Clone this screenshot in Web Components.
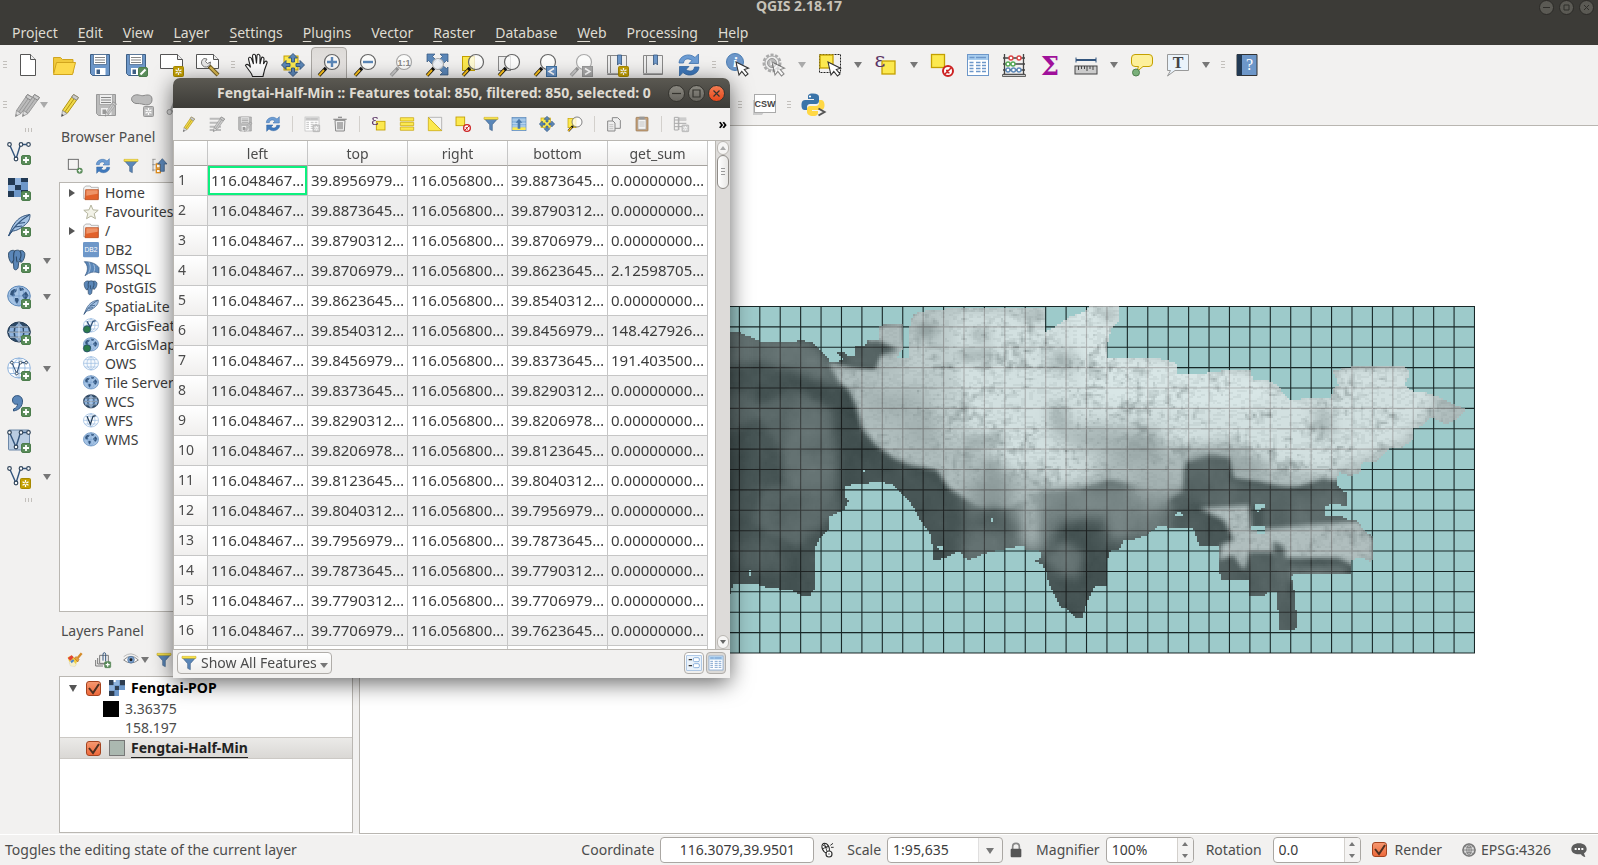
<!DOCTYPE html>
<html lang="en">
<head>
<meta charset="utf-8">
<title>QGIS 2.18.17</title>
<style>
html,body{margin:0;height:100%}
body{font:14px/20px "Noto Sans","Open Sans",sans-serif;color:#4c4c4c;background:#f2f1f0;overflow:hidden}
</style>
</head>
<body>
<qgis-app></qgis-app>
<script>
/* ---------- icon library, 24x24 grid ---------- */
const plus='<rect x="14.5" y="14.5" width="9" height="9" rx="1.5" fill="#5a8c5a" stroke="#4c7d4c"/><path d="M19 16v6M16 19h6" stroke="#fff" stroke-width="1.8"/>';
const star=(c='#c4a000',s='#a68800')=>`<rect x="13.5" y="13.5" width="10" height="10" rx="1" fill="${c}" stroke="${s}"/><path d="M18.5 15v7M15.5 16.7l6 3.6M21.5 16.7l-6 3.6" stroke="#fff" stroke-width="1.3"/><circle cx="18.5" cy="18.5" r="1" fill="${c}"/>`;
const lens=(inner='',h='#fcc21b',k='#111',g='#666',f='#fff')=>`<path d="M9 15l-7 7.5" stroke="${k}" stroke-width="3.4"/><path d="M7 17l-5 5.5" stroke="${h}" stroke-width="2"/><circle cx="15" cy="9" r="7.5" fill="${f}" fill-opacity=".75" stroke="${g}" stroke-width="1.2"/>${inner}`;
const arrow4='<path d="M12 .5l4.5 4.5h-3v4h-3V5h-3zM12 23.5l4.5-4.5h-3v-4h-3v4h-3zM.5 12L5 7.5v3h4v3H5v3zM23.5 12L19 7.5v3h-4v3h4v3z" fill="#5b87b8" stroke="#33557d" stroke-width=".9"/>';
const pencil=(b='#f0d94a',d='#b09310',t='#444')=>`<path d="M15.5 1.5l5 3L9 20.5l-4.5-3z" fill="${b}" stroke="${d}"/><path d="M18 3L6.8 19" stroke="${d}" stroke-width="1"/><path d="M15.5 1.5l5 3-2 2.7-4.8-3z" fill="#ccc" stroke="#888"/><path d="M4.5 17.5l4.5 3-5.5 3z" fill="#ddd" stroke="#888" stroke-width=".7"/><path d="M3.5 23.5l.3-2.5 2 1.2z" fill="${t}"/>`;
const floppy=(b='#6d97c9',s='#3e5f85',w='#fff')=>`<path d="M2.5 1.5h19v21h-17l-2-2z" fill="${b}" stroke="${s}"/><path d="M5.5 1.5h13v10h-13z" fill="${w}" stroke="${s}" stroke-width=".7"/><path d="M7 4.5h10M7 7h10M7 9.5h10" stroke="#777" stroke-width=".9"/><path d="M7 15h10.5v7H7z" fill="${w}"/><path d="M8.5 16.5H12V21H8.5z" fill="${s}"/>`;
const cursor='<path d="M10 9l3 13 2.8-3.6 3.7 4.6 2.5-2-3.7-4.5 4.2-1.3z" fill="#fff" stroke="#333" stroke-width="1.1"/>';
const vec='<path d="M2.5 3.5L9 18l4.5-14.5h6.5" fill="none" stroke="#33557d" stroke-width="1.4"/><g fill="#fff" stroke="#33475c" stroke-width="1.2"><circle cx="2.5" cy="3.5" r="1.8"/><circle cx="9" cy="18" r="1.8"/><circle cx="14" cy="3.5" r="1.8"/><circle cx="21.5" cy="3.5" r="1.8"/></g>';
const globe=(f,s)=>`<ellipse cx="12" cy="11" rx="11.3" ry="10" fill="${f}" stroke="${s}"/><path d="M12 1v20M1 11h22M3 5.5h18M3 16.5h18M12 1C4 6 4 16 12 21M12 1c8 5 8 15 0 20" fill="none" stroke="${s}" stroke-width=".9"/>`;
const globeBlue='<ellipse cx="12" cy="11" rx="11.3" ry="10" fill="#2d4966" stroke="#223a54"/><path d="M3 7h4l-.5 3.5H2zM8.5 7h7l.4 3.5H8zM17 7h4l1 3.5h-5zM2 12h4.5l.5 3.5H3zM8 12h8l-.5 3.5h-7zM17.5 12H22l-1 3.500h-4zM8 5.5L11.5 2v3.5zM12.5 2L16 5.5h-3.5zM8 17l3.5 3.5V17zM12.5 17v3.5L16 17z" fill="#8fb3dd"/><path d="M12 1v20M1 11.2h22M3 6h18M3 16.2h18" stroke="#dfeaf5" stroke-width=".8"/>';
const globeMap='<ellipse cx="12" cy="11" rx="11.3" ry="10" fill="#a5c3e4" stroke="#5b87b8"/><path d="M4 6l3-2 3 .5L9 7 7 8l1 2.500-2 1-3-2zM12 2.500l4 .5 1 2-4 1zM16 9l3-2.500 2.500 4-2.500 4-2-1-2-3zM8 13l3 0 1 2-2 4-2-3z" fill="#33557d"/><path d="M12 1v20M1 11h22M12 1C5 6 5 16 12 21M12 1c7 5 7 15 0 20" fill="none" stroke="#6d97c9" stroke-width=".6"/>';
const elephant='<path d="M2 4c2-3 6-3 7-2 2-1 5-1 6 0 3-1 5 0 6 3 0 3-1 7-4 9l-3-1-1 7c-2 3-5 2-5 0l-.5-6-2 1C3 13 1 8 2 4z" fill="#5b87b8" stroke="#2d4966"/><path d="M9 2c-2 3-1 7-1 9 0 2-1 2-2 3M15 2c2 2 2 6 0 9l2 2M12 14c-1-2-1-4-1-6" fill="none" stroke="#2d4966" stroke-width="1.3"/>';
const feather='<path d="M1.5 23C4 17 5 13 9 8.5 13 4 17 2.5 23 1.5c0 4-1 7-4.5 10C14 15.5 9 18 5.5 18z" fill="#a5c3e4" stroke="#33557d"/><path d="M1.5 23C6 15 12 8 22 2M8 14l7-1M11 10.5l7-1" fill="none" stroke="#33557d" stroke-width="1.2"/>';
const funnel='<path d="M2 4h20l-8 9v9l-4-2v-7z" fill="#5b87b8" stroke="#33557d" stroke-width=".8"/><path d="M1.5 2h21v3h-21z" fill="#fce94f" stroke="#c4a000" stroke-width=".7"/>';
const sync='<path d="M2 10C2 3 12-1 18 4.5L21.5 1v9.5H12l3-3C11 4.5 7 6 6.5 10z" fill="#6d9dd4" stroke="#3f72ad" stroke-width=".8"/><path d="M22 14c0 7-10 11-16 5.5L2.5 23v-9.5H12L9 16.5c4 3 8 1.5 8.5-2.5z" fill="#3f79bd" stroke="#3468a3" stroke-width=".8"/>';
const ysq=(x,y)=>`<rect x="${x}" y="${y}" width="13" height="13" fill="#fce94f" stroke="#c4a000" stroke-width="1.3"/>`;
const no='<circle cx="18" cy="18" r="5" fill="#fff" stroke="#cc2222" stroke-width="2"/><path d="M14.5 21.5l7-7M16 17.5h2.5M17.5 19.7h2" stroke="#cc2222" stroke-width="1.5"/>';
const tbl=(b='#6d97c9',h='#a8cdee')=>`<rect x="1.5" y="1.5" width="21" height="21" fill="#fff" stroke="${b}"/><rect x="2" y="2" width="20" height="5" fill="${h}"/><path d="M3.5 4.5h5M10 4.5h10M3.5 9.5h4M10 9.5h4.5M16 9.5h4M3.5 12.5h4M10 12.5h4.5M16 12.5h4M3.5 15.5h4M10 15.5h4.5M16 15.5h4M3.5 18.5h4M10 18.5h4.5M16 18.5h4" stroke="${b}" stroke-width="1.3"/>`;
const book='<path d="M2.5 2.5h19v19h-19z" fill="#eee" stroke="#888"/><path d="M5.5 2.5v19" stroke="#888"/><path d="M2 20.5h19" stroke="#aaa"/><path d="M12.5 2h4v10l-2-2-2 2z" fill="#6d97c9" stroke="#33557d" stroke-width=".8"/>';
const raster='<path d="M1 1h20v19H1z" fill="#6d97c9"/><path d="M1 1h7v7H1zM14 1h7v4h-7zM8 8h6v5H8zM1 14h6v6H1zM14 13h7v7h-7z" fill="#223a54"/><path d="M8 1h6v7H8zM1 8h7v6H1z" fill="#8fb3dd"/>';
const ICONS={
 new:'<path d="M4.5 1.5h10l5 5v16h-15z" fill="#fff" stroke="#555"/><path d="M14.5 1.5v5h5" fill="#eee" stroke="#555"/>',
 open:'<path d="M1.5 20V4.5h7l2 2h10.5V20z" fill="#f0c93c" stroke="#d1a51e"/><path d="M1.5 21.5l3-12h19l-3 12z" fill="#fcd94c" stroke="#d1a51e"/>',
 save:floppy(), saveas:floppy()+'<rect x="14.5" y="14.5" width="9" height="9" rx="1.5" fill="#5a8c5a" stroke="#4c7d4c"/><path d="M16.5 21.5l5-5" stroke="#fff" stroke-width="2.2"/>',
 composer:'<path d="M.5 1.5h17l5 5v9h-22z" fill="#fff" stroke="#555"/><path d="M17.5 1.5v5h5" fill="#eee" stroke="#555"/>'+star(),
 manager:'<path d="M.5 1.5h17l5 5v9h-22z" fill="#fff" stroke="#555"/><path d="M17.5 1.5v5h5" fill="#eee" stroke="#555"/><path d="M13 13l9 9" stroke="#6e5a1e" stroke-width="4"/><path d="M14 14l8 8" stroke="#d9b951" stroke-width="2.4"/><path d="M8 5.5a4.5 4.5 0 1 0 6 6L14.5 9l-3 1.5-2-2L11 6z" fill="#e8e8e8" stroke="#777"/>',
 hand:'<path d="M8.5 23.5c-.5-2.5-1.5-3.5-3-5.5L1.5 12.5c.5-1.7 2.5-1.5 4 .5l1 1.5L4.5 6c0-2 2-2.5 3-.5L9.5 11 8.500 3c0-2 2.500-2.500 3-.5l1 8 .5-8c.5-2 2.5-1.5 3 .5v8l1.500-6c.5-1.500 2.500-1 2.500 1l-.5 5 1.500-2.500c1-1 2.500 0 2 1.500L20.500 17c-.5 2.500-1 4-1.500 6.500z" transform="translate(-1 0)" fill="#fff" stroke="#222" stroke-width="1.1"/>',
 pan:'<rect x="3" y="3" width="14" height="14" fill="#fce94f" stroke="#c4a000"/>'+arrow4,
 zoomin:lens('<path d="M15 4v10M10 9h10" stroke="#5b87b8" stroke-width="2.4"/>'),
 zoomout:lens('<path d="M10 9h10" stroke="#5b87b8" stroke-width="2.4"/>'),
 zoom11:lens('<text x="15" y="12.5" text-anchor="middle" font-family="Liberation Sans" font-weight="bold" font-size="9" fill="#888">1:1</text>','#ccc','#999','#aaa'),
 full:'<path d="M2 1h8L7.5 3.5l4 4-4 4-4-4L2 9zM23 1h-8l2.5 2.5-4 4 4 4 4-4L23 9zM23 22h-8l2.5-2.5-4-4 4-3 4 3L23 14z" fill="#5b87b8" stroke="#33557d" stroke-width=".7"/><path d="M9 15l-7 7.5" stroke="#111" stroke-width="3.4"/><path d="M7 17l-5 5.5" stroke="#fcc21b" stroke-width="2"/><circle cx="13" cy="11" r="5.5" fill="#eef2f6" fill-opacity=".9" stroke="#aaa"/>',
 zoomsel:'<rect x="1.5" y="3.5" width="12" height="14" fill="#fce94f" stroke="#c4a000"/>'+lens(),
 zoomlay:'<rect x="1.5" y="3.5" width="12" height="14" fill="#eee" stroke="#888"/>'+lens(),
 zoomlast:lens()+'<rect x="13.5" y="13.5" width="10" height="10" fill="#6d97c9" stroke="#3f6f9f"/><path d="M21 15.5l-5 3 5 3" fill="none" stroke="#fff" stroke-width="1.5"/>',
 zoomnext:lens('','#ccc','#999','#aaa')+'<rect x="13.5" y="13.5" width="10" height="10" fill="#aaa" stroke="#999"/><path d="M16 15.5l5 3-5 3" fill="none" stroke="#fff" stroke-width="1.5"/>',
 bookmarknew:book+star(), bookmarks:book, refresh:sync,
 identify:'<circle cx="9" cy="9" r="8.5" fill="#6d97c9" stroke="#4d7fb4"/><text x="9" y="14" text-anchor="middle" font-family="Liberation Serif" font-style="italic" font-weight="bold" font-size="15" fill="#fff">i</text>'+cursor,
 action:'<circle cx="10" cy="10" r="8" fill="#eee" stroke="#aaa" stroke-width="3" stroke-dasharray="3 1.5"/><circle cx="10" cy="10" r="7" fill="#eee" stroke="#aaa"/><circle cx="10" cy="10" r="4.5" fill="#bbb" stroke="#999"/><path d="M8.5 7.5v5l4-2.5z" fill="#fff"/><g opacity=".55">'+cursor+'</g>',
 select:'<rect x="1.5" y="1.5" width="21" height="18" fill="none" stroke="#222" stroke-dasharray="2 1"/>'+ysq(2,2)+cursor,
 expr:ysq(8,8)+'<text x="6" y="14" text-anchor="middle" font-family="DejaVu Serif" font-size="21" fill="#5c3566">ε</text>',
 deselect:ysq(1.5,1.5)+no, table:tbl(),
 abacus:'<path d="M2.5 1v20M21.5 1v20M1 5h22M1 11h22M1 17h22M1 21.5h22" stroke="#444" stroke-width="1.3"/><g fill="#fff" stroke-width="1.4"><g stroke="#d44"><circle cx="9" cy="5" r="2"/><circle cx="17" cy="5" r="2"/></g><g stroke="#5a5"><circle cx="6" cy="11" r="2"/><circle cx="11" cy="11" r="2"/></g><g stroke="#5b87b8"><circle cx="6" cy="17" r="2"/><circle cx="11.5" cy="17" r="2"/><circle cx="17" cy="17" r="2"/></g></g><path d="M.5 21.5h23v2H.5z" fill="#ccc" stroke="#444" stroke-width=".8"/>',
 sigma:'<text x="12" y="22" text-anchor="middle" font-family="DejaVu Serif" font-weight="bold" font-size="26" fill="#a0109a">Σ</text>',
 ruler:'<path d="M2 7h20" stroke="#33557d" stroke-width="2"/><path d="M2 4.5v5M22 4.5v5" stroke="#33557d"/><rect x="1" y="13" width="22" height="8" fill="#ccc" stroke="#444"/><path d="M4.5 13v4M7.5 13v3M10.5 13v3M13 13v5M16 13v3M19 13v4" stroke="#444"/>',
 tip:'<path d="M5 1.5h14q3.5 0 3.5 3.5v5q0 3.5-3.5 3.5h-6L6.5 19l2-5.5H5Q1.5 13.5 1.5 10V5Q1.5 1.5 5 1.5z" fill="#fdf09a" stroke="#c4a000"/><circle cx="6" cy="19.5" r="3.5" fill="#7ab07a" stroke="#4f7f4f"/>',
 text:'<path d="M1.5 1.5h21v16H9L1.5 23l3-5.5h-3z" fill="#eaf3fb" stroke="#999"/><text x="12" y="15" text-anchor="middle" font-family="Liberation Serif" font-weight="bold" font-size="16" fill="#444">T</text>',
 help:'<path d="M2 1.5h20v21H2z" fill="#6d97c9" stroke="#333"/><path d="M2 1.5h5v21H2z" fill="#223a54"/><text x="14.5" y="17" text-anchor="middle" font-family="Liberation Serif" font-size="16" fill="#fff">?</text>',
 pencils:'<g transform="translate(-4 0)">'+pencil('#bbb','#999','#888')+'</g><g transform="translate(3 0)">'+pencil('#bbb','#999','#888')+'</g>',
 pencil:pencil(), savegray:floppy('#bbb','#999','#eee')+'<g transform="translate(9 8) scale(.65)">'+pencil('#ccc','#999','#888')+'</g>',
 blob:'<path d="M4 2.5c4-2 7 1 10 0 4-1 8-1 8 4s-4 6-8 5-5-1-8-1c-5-1-6-6-2-8z" fill="#bbb" stroke="#888"/>'+star('#bbb','#999'),
 node:'<path d="M4 18Q8 12 9 4M4 18l12 1" fill="none" stroke="#aaa" stroke-width="2"/><circle cx="3.5" cy="19" r="2.5" fill="#ddd" stroke="#999"/>',
 csw:'<path d="M1 7v15h9l2-3h-9V7z" fill="#ccc"/><rect x="2.5" y="1.5" width="21" height="18" fill="#fff" stroke="#aaa"/><text x="13" y="14" text-anchor="middle" font-family="Liberation Sans" font-weight="bold" font-size="9" fill="#444">CSW</text>',
 python:'<path d="M12 .5c-5 0-5 2-5 3.5V6h6v1H4C1 7 .5 10 .5 12s.5 5 3 5H6v-3c0-2 1.5-3 3-3h6c2 0 3-1.5 3-3V4c0-2-2-3.5-6-3.5z" fill="#3a74a9"/><path d="M12 23c5 0 5-2 5-3.5V18h-6v-1h9c3 0 3.5-3 3.5-5s-1-5-3-5H18v3c0 2-1.5 3-3 3H9c-2 0-3 1.5-3 3v3c0 2 2 4 6 4z" fill="#ffd845"/><circle cx="9" cy="3.5" r="1.1" fill="#fff"/><path d="M17.5 15.5l6 3.5-6 3.5" fill="none" stroke="#555" stroke-width="2"/>',
 vector:vec+plus, raster:raster+plus, spatialite:feather+plus, postgis:'<g transform="scale(.85 .95)">'+elephant+'</g>'+plus, wms:globeMap+plus, wcs:globeBlue+plus,
 wfs:globe('#fff','#8fb3dd')+'<g transform="translate(3 3) scale(.75)">'+vec+'</g>'+plus,
 comma:'<path d="M5.5 7c0-6 10-6 10 1 0 5-3 9-9 10v-2c3-1 4-3 4-5-3 1-5-1-5-4z" fill="#5b87b8" stroke="#33557d"/>'+plus,
 virt:'<rect x="1.5" y="1" width="21" height="20" rx="1" fill="#b9cce2" stroke="#6d88a8"/>'+vec+plus,
 shape:vec+star(),
 addsel:'<rect x="2" y="2" width="15" height="15" fill="#fff" fill-opacity=".2" stroke="#666" stroke-width="1.4"/><circle cx="19" cy="19" r="4.5" fill="#5a8c5a"/><path d="M19 16.5v5M16.5 19h5" stroke="#fff" stroke-width="1.4"/>',
 filter:funnel,
 collapse:'<path d="M2 2h5M2 10h5M2 18h5M3 2v18M9 7v6h5M9 13v7h5" fill="none" stroke="#777"/><rect x="8" y="9" width="6" height="6" fill="#fff" stroke="#e58f1b" stroke-width="2"/><rect x="8" y="17" width="6" height="5" fill="#fff" stroke="#e58f1b" stroke-width="2"/><path d="M17 1l7 8h-4v11h-6V9h-4z" fill="#5b87b8" stroke="#33557d"/>',
 folder:'<path d="M1 4.5l3-3h7l1 2h11v17H1z" fill="#f4f4f4" stroke="#999"/><path d="M4 7h19v15H3z" fill="#e2612a" stroke="#b34312"/><path d="M5 8h17v5L5 16z" fill="#f3a983" fill-opacity=".7"/>',
 fav:'<path d="M12 1.5l3 7.3 7.8.6-6 5.1 1.9 7.6L12 18l-6.7 4.1 1.9-7.6-6-5.1 7.8-.6z" fill="#f3f3e8" stroke="#b5b59f" stroke-width="1.5"/>',
 db2:'<rect x="0" y="0" width="24" height="23" rx="2" fill="#6d97c9"/><text x="12" y="15.5" text-anchor="middle" font-family="Liberation Sans" font-size="10" fill="#fff">DB2</text>',
 mssql:'<path d="M2 1c10 0 18 3 22 9v8c-8-3-14-1-21 4C8 14 8 7 2 1z" fill="#5b87b8" stroke="#33557d"/><path d="M9 2c3 6 2 11-1 17M16 5c2 4 2 8 0 12" fill="none" stroke="#c5d8ee"/>',
 elephant, feather, arcfs:globe('#fff','#8fb3dd')+'<path d="M6 5l5 9 4-9 4-1" fill="none" stroke="#33557d" stroke-width="2"/><circle cx="6" cy="17" r="5.5" fill="#2c7a4b" stroke="#1d3f6b"/>',
 arcms:globeMap+'<circle cx="6" cy="17" r="5.5" fill="#2c7a4b" stroke="#1d3f6b"/>',
 ows:globe('#f5f9fd','#8fb3dd'), tile:globeMap, globeblue:globeBlue, wfsg:globe('#fff','#8fb3dd')+'<path d="M6 5l5 12 4-12 4-1" fill="none" stroke="#223a54" stroke-width="1.8"/>',
 style:'<path d="M1 8l6-3 8 8-2 8-8-1z" fill="#f3cf3a"/><path d="M1 9l6-4 3 3-5 5z" fill="#e0433b"/><path d="M3 15l5-3 6 7-2 3-7-1z" fill="#f7f0c8" stroke="#ccc" stroke-width=".5"/><path d="M5 14l4-3 2 2-4 4z" fill="#4a86cf"/><path d="M11 9l3-2 4 4-2 4z" fill="#e8a33d" stroke="#b36b12"/><path d="M16 9l6-7" stroke="#d58b28" stroke-width="3.5"/>',
 group:'<path d="M1 12v9h11M4 9v9h11M7 5h13v12H7z" fill="none" stroke="#777" stroke-width="1.5"/><path d="M12 13V4q0-3 2-3t2 3v10" fill="none" stroke="#33557d" stroke-width="1.5"/>'+plus,
 eye:'<path d="M1 12Q12 1 23 12 12 21 1 12z" fill="#fff" stroke="#888" stroke-width="1.5"/><circle cx="12" cy="11.5" r="5" fill="#7ba0cd" stroke="#4d719c"/><circle cx="12" cy="11.5" r="2.2" fill="#222"/><path d="M1 7Q12-2 23 8" fill="none" stroke="#bbb" stroke-width="1.5"/>',
 rasterlayer:'<path d="M0 0h24v24H0z" fill="#6d97c9"/><path d="M0 0h7v8H0zM16 0h8v8h-8zM9 9h6v6H9zM0 16h8v8H0z" fill="#2e3d50"/><path d="M15 15h9v9h-9z" fill="#fff"/><path d="M7 0h9v8H7zM0 8h8v8H0z" fill="#8fb3dd"/><path d="M7 0h3v3H7z" fill="#fff"/>',
 editmulti:'<path d="M1 4h17M1 10h17M1 16h17M1 21h17" stroke="#bbb" stroke-width="3"/><g transform="translate(3 0)">'+pencil('#ccc','#999','#888')+'</g>',
 addrow:tbl('#bbb','#ccc')+star('#ccc','#aaa'),
 addcol:'<path d="M2 2h6v19H2zM2 6h18M2 11h18M2 16h12" stroke="#aaa" stroke-width="1.5"/><rect x="9" y="2" width="11" height="4" fill="#ccc"/><path d="M9 2v19" stroke="#aaa"/>'+star('#ccc','#aaa'),
 trash:'<path d="M4.5 6.5h15l-1 16h-13z" fill="#eee" stroke="#888" stroke-width="1.5"/><path d="M2 5h20M9 2h6M9 9v11M12 9v11M15 9v11" stroke="#777" stroke-width="1.6"/>',
 selall:'<path d="M2 2.5h20v5H2zM2 9.5h20v5H2zM2 16.5h20v5H2z" fill="#fce94f" stroke="#c4a000"/>',
 invert:'<path d="M2 2h20v20z" fill="#f4f4f4" stroke="#999"/><path d="M2 2v20h20z" fill="#fce94f" stroke="#c4a000"/>',
 movetop:'<rect x="1.5" y="2" width="21" height="20" fill="#8fb8e0" stroke="#5b87b8"/><path d="M2 6h20M2 11h20M2 15h20" stroke="#d8e8f6"/><path d="M2 17h20v4H2z" fill="#fce94f"/><path d="M12 4l5 6h-3v9h-4v-9H7z" fill="#4a79ad"/>',
 copy:'<path d="M9.5 2.5h8l4 4v12h-12z" fill="#eee" stroke="#888" stroke-width="1.5"/><path d="M2.5 7.5h8l3 3v12h-11z" fill="#eee" stroke="#888" stroke-width="1.5"/><path d="M5 13h6M5 16h6M5 19h6" stroke="#aaa"/>',
 paste:'<rect x="3" y="2" width="18" height="20.5" rx="1" fill="#c9a37a" stroke="#8e6f4b"/><path d="M6 5h12v15H6z" fill="#f4f4f4" stroke="#999"/><path d="M8 1h8v4H8z" fill="#999"/><path d="M8 9h8M8 12h8M8 15h8" stroke="#aaa"/>',
 formview:'<rect x="1" y="1" width="22" height="22" fill="#eaf2fa" stroke="#8fb3dd"/><path d="M4 7h5M4 16h5" stroke="#333" stroke-width="2"/><rect x="11" y="4" width="9" height="6" rx="2" fill="#fff" stroke="#8fb3dd" stroke-width="1.5"/><rect x="11" y="13" width="9" height="6" rx="2" fill="#fff" stroke="#8fb3dd" stroke-width="1.5"/>',
 extents:'<ellipse cx="10" cy="9" rx="5" ry="7.5" transform="rotate(-25 10 9)" fill="#fff" stroke="#222" stroke-width="1.8"/><path d="M5 4l8 5M6 10l8-4M8 2l4 12" stroke="#222" stroke-width="1.3"/><circle cx="15" cy="18" r="4.5" fill="#fff" stroke="#333" stroke-width="1.8"/><path d="M17 5l4-3M18 8l4 0M14 18h2" stroke="#333" stroke-width="1.5"/>',
 lock:'<path d="M7 11V7q0-5 5-5t5 5v4" fill="none" stroke="#888" stroke-width="2.5"/><rect x="4" y="10" width="16" height="13" rx="1.5" fill="#555"/>',
 crs:'<circle cx="12" cy="12" r="9" fill="#ddd" stroke="#777" stroke-width="2.5"/><path d="M12 2v20M2 12h20M5 6q7 5 14 0M5 18q7-5 14 0M12 3q-7 9 0 18q7-9 0-18" fill="none" stroke="#888" stroke-width="1.5"/>',
 bubble:'<path d="M12 2c7 0 11.5 3.5 11.5 8.5 0 3-1.5 5-4 6.5l2 5.5c-3 0-5.5-2-6.5-4h-3c-7 0-11.5-3-11.5-8S5 2 12 2z" fill="#5c5c5c"/><path d="M5.5 9h3v3h-3zM10.5 9h3v3h-3zM15.5 9h3v3h-3z" fill="#fff"/>'
};

class Base extends HTMLElement{
  connectedCallback(){
    if(!this.shadowRoot){this.attachShadow({mode:'open'}).innerHTML=this.render();this.ready&&this.ready();}
  }
}
const define=(n,c)=>customElements.define(n,c);

define('q-icon',class extends Base{
  render(){return `<style>:host{display:block;flex:none;width:var(--icon,24px);height:var(--icon,24px)}svg{display:block;width:100%;height:100%;overflow:visible}</style><svg viewBox="0 0 24 24" fill="none" aria-hidden="true">${ICONS[this.getAttribute('name')]||''}</svg>`}
});

/* Button with optional drop-down arrow */
define('tool-button',class extends Base{
  render(){
    const m=this.hasAttribute('menu');
    return `<style>
    :host{display:flex;flex:none;width:var(--cell,36px);height:var(--cell,36px)}
    :host([menu]){width:var(--menu-cell,56px)}
    :host([menu=dim]){--arrow:#aaa}
    button{all:unset;display:flex;align-items:center;flex:1;height:100%;padding-left:var(--inset,6px);box-sizing:border-box}
    :host([pressed]) button{background:linear-gradient(#dddad7,#eceae8);border:1px solid #a9a6a2;border-radius:4px;padding-left:5px}
    i{width:0;border:4px solid transparent;border-top:6px solid var(--arrow,#777);border-bottom:0;margin-left:var(--arrow-gap,12px)}
    </style><button aria-label="${this.getAttribute('icon')}"><q-icon name="${this.getAttribute('icon')}"></q-icon>${m?'<i></i>':''}</button>`}
});

define('bar-handle',class extends Base{
  render(){return `<style>:host{display:flex;flex:none;width:13px;align-items:center;justify-content:center}
  :host([first]){width:10px}
  i{width:4px;height:8px;background:repeating-linear-gradient(#c3c0bc 0 1px,transparent 1px 3px)}
  :host([side]){width:auto;height:10px}:host([side]) i{width:8px;height:4px;background:repeating-linear-gradient(90deg,#c3c0bc 0 1px,transparent 1px 3px)}</style><i></i>`}
});

const build=s=>s.split(' ').map(t=>{
  if(t==='|')return '<bar-handle></bar-handle>';
  if(t==='^')return '<bar-handle first></bar-handle>';
  if(t==='/')return '<span class="sep"></span>';
  if(t==='_')return '<span class="gap"></span>';
  const m=t.match(/^([a-z0-9]+)([>~*]?)$/);
  return `<tool-button icon="${m[1]}"${m[2]==='>'?' menu':m[2]==='~'?' menu="dim"':m[2]==='*'?' pressed':''}></tool-button>`;
}).join('');

define('tool-bar',class extends Base{
  render(){return `<style>:host{display:flex;height:40px;align-items:center}bar-handle{height:100%}
  .gap{width:537px;flex:none}.sep{width:1px;height:16px;margin:0 5px;background:#d3d0cc}</style>${build(this.getAttribute('items'))}`}
});

define('title-bar',class extends Base{
  render(){return `<style>:host{display:grid;grid-template-columns:1fr auto 1fr;height:18px;background:#3c3b37;color:#c6c2b8;font-weight:700;line-height:12px;overflow:hidden}
  .b{display:flex;gap:5px;justify-content:flex-end;padding-right:4px}
  button{all:unset;width:15px;height:15px;border:1px solid #2b2a27;border-radius:50%;background:#5b5a54;box-sizing:border-box;display:grid;place-items:center}
  svg{width:7px;height:7px;stroke:#2f2e2a;fill:none}</style><span></span><span>QGIS 2.18.17</span><span class="b">
  <button aria-label="Minimize"><svg viewBox="0 0 7 7"><path d="M0 3.5h7"/></svg></button><button aria-label="Restore"><svg viewBox="0 0 7 7"><path d="M1 1h5v5H1z"/></svg></button><button aria-label="Close"><svg viewBox="0 0 7 7"><path d="M1 1l5 5M6 1L1 6"/></svg></button></span>`}
});

define('menu-bar',class extends Base{
  render(){
    const items=['Pro_ject','_Edit','_View','_Layer','_Settings','_Plugins','Vect_or','_Raster','_Database','_Web','Pro_cessing','_Help'];
    return `<style>:host{display:flex;gap:20px;height:27px;padding:0 12px;background:#3c3b37;color:#dfdbd2}
    button{all:unset;line-height:30px}u{text-underline-offset:3px}</style>${items.map(t=>`<button>${t.replace(/_(.)/,'<u>$1</u>')}</button>`).join('')}`}
});

define('layer-bar',class extends Base{
  render(){return `<style>:host{display:flex;flex-direction:column;width:59px;--inset:7px;--menu-cell:59px;--arrow-gap:12px}
  bar-handle{width:58px}</style><bar-handle side></bar-handle>${build('vector raster spatialite postgis> wms> wcs wfs> comma virt shape>')}<bar-handle side></bar-handle>`}
});

/* Dock: title, small toolbar and a slotted white box */
define('dock-panel',class extends Base{
  render(){return `<style>:host{display:flex;flex-direction:column;min-height:0;--icon:16px;--cell:28px;--menu-cell:33px;--arrow-gap:2px}
  h2{margin:0 0 2px;padding-left:2px;font:inherit;line-height:22px}
  tool-bar{height:32px;padding-left:2px}
  .box{flex:1;background:#fff;border:1px solid #bab7b2;overflow:hidden}</style>
  <h2>${this.getAttribute('heading')}</h2><tool-bar items="${this.getAttribute('tools')}"></tool-bar><div class="box"><slot></slot></div>`}
});

define('browser-tree',class extends Base{
  render(){
    const rows=[['folder','Home',1],['fav','Favourites'],['folder','/',1],['db2','DB2'],['mssql','MSSQL'],['elephant','PostGIS'],['feather','SpatiaLite'],['arcfs','ArcGisFeatureServer'],['arcms','ArcGisMapServer'],['ows','OWS'],['tile','Tile Server (XYZ)'],['globeblue','WCS'],['wfsg','WFS'],['tile','WMS']];
    return `<style>:host{display:block;--icon:16px;color:#3c3c3c}
    ul{margin:0;padding:0;list-style:none}li{display:flex;align-items:center;height:19px;padding-left:9px;white-space:nowrap}
    i{width:6px;height:0;border:4px solid transparent;border-left:6px solid #555;border-right:0;box-sizing:border-box;margin-right:8px}
    i.n{border-color:transparent}q-icon{margin-right:6px}</style><ul>${rows.map(r=>`<li><i class="${r[2]?'':'n'}"></i><q-icon name="${r[0]}"></q-icon>${r[1]}</li>`).join('')}</ul>`}
});

const checkCss=`input[type=checkbox]{appearance:none;margin:0;width:15px;height:15px;flex:none;border:1px solid #a5431f;border-radius:3px;background:no-repeat center/13px url('data:image/svg+xml,<svg xmlns="http://www.w3.org/2000/svg" viewBox="0 0 13 13"><path d="M2 6l4 5 6-9" fill="none" stroke="%23503020" stroke-width="2"/></svg>'),linear-gradient(#f5976f,#ee6a3c)}`;

define('layer-tree',class extends Base{
  render(){return `<style>:host{display:block;--icon:16px;color:#4c4c4c}${checkCss}
  div{display:flex;align-items:center;height:19px;box-sizing:border-box}
  .l{height:22px;padding-left:26px;color:#000;font-weight:700}
  .l input{margin-right:8px}.l label{margin-left:6px}
  .s{background:linear-gradient(#ebeae8,#dad8d5);border:1px solid #ccc9c5;border-width:1px 0;color:#222}
  .s label{border-bottom:1px solid #222;line-height:18px}
  i{width:16px;height:16px;flex:none}.k{background:#000;margin:0 6px 0 43px}.g{background:#abb8b0;border:1px solid #777;box-sizing:border-box}
  b{width:0;border:4px solid transparent;border-top:7px solid #555;border-bottom:0;margin:0 9px 0 -17px}
  .t{padding-left:65px}</style>
  <div class="l"><b></b><input type="checkbox" id="p" checked><q-icon name="rasterlayer"></q-icon><label for="p">Fengtai-POP</label></div>
  <div><i class="k"></i>3.36375</div><div class="t">158.197</div>
  <div class="l s"><input type="checkbox" id="h" checked><i class="g"></i><label for="h">Fengtai-Half-Min</label></div>`}
});

/* Map: vector grid with a translucent grey population raster above it */
define('map-canvas',class extends Base{
  render(){
    let d='';
    for(let i=0;i<=50;i++)d+=`M${(i*20.42+.5).toFixed(2)} 0V347`;
    for(let j=0;j<=17;j++)d+=`M0 ${(j*20.38+.5).toFixed(2)}H1022`;
    return `<style>:host{display:flex;align-items:center;justify-content:center;background:#fff;border:1px solid #b9b6b1;border-right:0;overflow:hidden;min-width:0}
    .map{display:grid;flex:none;width:1022px;height:348px;margin-right:30px}
    .map>*{grid-area:1/1;width:100%;height:100%}canvas{image-rendering:pixelated;opacity:.7}</style>
    <div class="map"><svg viewBox="0 0 1022 348"><path d="M0 0h1022v347H0z" fill="#9dcaca"/><path d="${d}" fill="none" stroke="#0a1515" stroke-opacity=".9" stroke-width="1.1"/></svg><canvas width="511" height="174"></canvas></div>`}
  ready(){
    const W=511,H=174,mk=()=>{const c=document.createElement('canvas');c.width=W;c.height=H;const g=c.getContext('2d');g.setTransform(.5,0,0,.5,-227,-153);return g};
    const poly=(g,s)=>{const p=s.split(' ').map(Number);g.beginPath();for(let i=0;i<p.length;i+=2)g.lineTo(p[i],p[i+1]);g.closePath();g.fill()};
    const m=mk();
    poly(m,'500 380 600 340 700 325 730 331 740 332 760 341 795 342 800 340 812 342 822 350 829 358 830 363 838 363 844 359 838 352 845 352 850 356 857 357 857 346 867 345 869 340 881 341 880 327 887 324 904 324 903 350 896 359 910 357 911 325 914 314 925 311 955 308 1045 308 1045 324 1047 332 1060 324 1070 317 1083 313 1090 306 1120 306 1120 320 1112 330 1108 345 1108 358 1122 357 1160 358 1165 360 1177 363 1177 375 1196 375 1222 371 1252 370 1254 381 1270 381 1279 386 1290 400 1315 398 1332 399 1334 388 1340 386 1334 371 1352 367 1363 366 1406 367 1411 372 1406 385 1413 391 1425 392 1442 398 1455 405 1467 409 1465 412 1455 421 1447 424 1432 417 1424 426 1414 429 1414 440 1402 448 1390 448 1378 462 1363 463 1362 472 1350 476 1340 472 1337 484 1341 489 1348 493 1348 506 1335 504 1325 506 1325 516 1341 515 1350 520 1358 520 1365 530 1373 536 1373 562 1360 557 1352 561 1352 573 1292 575 1295 590 1297 610 1297 629 1280 631 1279 610 1277 592 1267 592 1267 596 1250 595 1250 580 1222 580 1219 565 1220 546 1200 545 1194 528 1178 529 1160 525 1148 535 1137 539 1125 540 1120 549 1112 550 1108 560 1109 585 1095 587 1089 600 1083 618 1076 618 1070 610 1062 607 1057 597 1050 585 1048 573 1044 565 1035 561 1043 558 1040 549 1028 551 1025 545 1010 548 990 552 970 560 965 558 961 551 950 556 940 560 934 560 934 548 931 533 921 520 913 505 900 490 892 484 880 482 860 484 845 486 845 497 850 501 845 510 830 517 831 528 820 540 815 550 815 590 810 597 803 596 795 591 780 589 770 588 760 585 735 583 730 598 600 600 500 500');
    m.globalCompositeOperation='destination-out';
    [[1257,504,4,7],[1263,504,2,5],[1253,526,12,4],[1258,530,8,3],[863,470,4,2],[939,546,5,3],[992,518,2,3],[1177,513,6,3],[750,571,2,4]].forEach(r=>m.fillRect(...r));
    const g=mk();
    g.fillStyle='rgb(34,34,34)';g.fillRect(400,300,1100,360);
    const f=(v,b,s,a=1)=>{g.filter=b?`blur(${b}px)`:'none';g.fillStyle=`rgba(${v},${v},${v},${a})`;poly(g,s)};
    /* western hills */
    f(76,2,'720 325 770 335 815 345 830 362 845 385 838 392 800 372 780 368 760 362 720 368');
    f(74,2,'782 405 800 390 832 410 838 450 838 515 815 518 790 500 782 465');
    f(62,2,'725 395 750 390 760 405 795 390 788 440 780 450 760 415 725 440');
    f(62,2,'765 490 785 485 840 505 825 525 800 545 765 535 755 515');
    f(48,2,'735 540 775 540 790 570 760 575 735 560');
    f(28,2,'800 380 850 390 860 420 870 450 850 465 840 400');
    /* southern fringe */
    f(70,3,'965 510 985 505 1010 520 1030 560 960 565 965 540');
    f(100,3,'1010 490 1060 480 1120 480 1190 480 1190 535 1110 540 1090 520 1060 530 1045 560 1020 545 1005 520');
    f(125,3,'1130 485 1190 480 1175 510 1130 515',.7);
    /* urban core */
    f(184,1,'830 363 844 366 876 369 882 348 868 342 880 325 904 322 904 350 910 320 925 305 1125 303 1200 360 1330 370 1480 360 1480 430 1370 476 1350 478 1320 484 1290 490 1262 482 1235 478 1230 458 1215 452 1186 462 1184 485 1160 488 1110 480 1080 488 1040 492 1010 508 985 508 965 498 950 488 938 470 912 465 895 458 878 446 863 428 857 405 850 390 840 382');
    f(205,3,'912 312 970 308 980 450 950 440 930 400 890 400 870 385 905 370');
    f(234,3,'960 312 1125 303 1110 355 1180 360 1330 398 1340 365 1410 365 1440 400 1400 445 1330 472 1250 462 1150 440 1060 480 1010 470 975 440 960 400 955 350');
    f(242,2,'1075 310 1125 303 1112 355 1180 365 1255 375 1280 392 1240 410 1100 400 1070 360');
    f(224,3,'1020 465 1060 460 1100 470 1080 484 1050 484');
    f(185,3,'1025 470 1040 470 1038 545 1028 550 1022 520');
    f(165,4,'1140 462 1185 475 1180 500 1130 492');
    f(135,4,'960 485 1000 480 1018 490 1005 515 975 508');
    f(110,3,'1045 490 1110 486 1130 500 1050 505',.7);
    f(125,4,'1050 432 1090 425 1160 428 1165 455 1120 462 1080 450',.6);
    f(110,3,'1185 450 1225 440 1270 460 1260 475 1190 470',.5);
    f(130,4,'865 390 925 385 930 400 900 415 870 410',.4);f(125,4,'905 418 930 418 935 448 915 448',.4);
    f(115,3,'985 462 1000 458 1006 480 995 495 985 485',.6);
    f(120,3,'1050 405 1066 405 1068 430 1055 432',.7);f(120,3,'1048 355 1075 352 1080 368 1055 370',.6);f(130,3,'1315 408 1330 408 1333 435 1322 438',.7);
    f(115,2,'915 324 935 322 938 336 920 340',.7);f(130,2,'1100 312 1115 308 1118 320 1105 320',.6);f(120,2,'1022 312 1042 312 1042 320 1025 322',.5);
    f(120,2,'958 350 995 348 995 362 960 362',.5);f(120,2,'965 436 1005 434 1005 446 970 448',.6);f(120,2,'970 330 990 328 992 342 972 338',.5);
    f(30,3,'1062 525 1105 518 1110 590 1085 618 1060 600');f(110,2,'1045 560 1062 540 1085 552 1080 580 1060 575',.6);
    f(40,3,'975 510 1000 505 1022 530 1010 535 980 525',.8);
    f(64,3,'1160 505 1180 505 1200 545 1150 530',.6);
    /* eastern lowland */
    f(58,1,'1186 470 1210 458 1230 458 1232 480 1265 485 1300 487 1325 478 1350 490 1352 525 1265 530 1265 505 1200 505 1170 505 1172 498 1184 492');
    f(80,3,'1285 495 1345 495 1345 520 1290 525',.7);
    f(42,2,'1172 500 1200 505 1225 525 1235 545 1195 550 1175 530');
    f(50,1,'1215 560 1250 552 1278 540 1302 578 1300 640 1275 640 1240 600 1215 585');
    f(185,1,'1200 508 1250 505 1252 530 1310 525 1360 521 1375 540 1375 575 1340 558 1280 558 1275 552 1250 552 1245 570 1235 555 1220 560 1222 545 1235 540 1225 520');
    f(95,2,'1282 568 1345 566 1350 580 1290 580');f(60,1,'1274 541 1285 546 1290 575 1285 600 1275 570');
    f(52,1,'857 347 878 340 900 350 878 357 876 368 850 366 845 350');
    const out=this.shadowRoot.querySelector('canvas').getContext('2d');
    const A=m.getImageData(0,0,W,H).data,img=g.getImageData(0,0,W,H),D=img.data;
    const h=(x,y)=>{const s=Math.sin(x*127.1+y*311.7)*43758.5453;return s-Math.floor(s)};
    const n=(x,y)=>{const i=Math.floor(x),j=Math.floor(y),u=x-i,v=y-j;return (h(i,j)*(1-u)+h(i+1,j)*u)*(1-v)+(h(i,j+1)*(1-u)+h(i+1,j+1)*u)*v};
    for(let y=0;y<H;y++)for(let x=0;x<W;x++){
      const k=(y*W+x)*4,b=D[k];let v=b;
      if(b>130){const q=(b-130)/110,t=n(x/8+9,y/6)*.5+n(x/2,y/2+40)*.5;v-=Math.max(0,t-.55)*180*q;v-=(h(x>>1,y)>.7?15*q:0);}
      else v+=(n(x/9,y/9)-.5)*18+(n(x/3,y/3)-.5)*6;
      D[k]=D[k+1]=D[k+2]=Math.max(10,Math.min(245,v));D[k+3]=A[k+3]>127?255:0;
    }
    out.putImageData(img,0,0);
  }
});

define('attribute-table',class extends Base{
  render(){
    const t='8956979 8873645 8790312 8706979 8623645 8540312 8456979 8373645 8290312 8206978 8123645 8040312 7956979 7873645 7790312 7706979 7623645'.split(' ');
    const sum={3:'2.12598705…',5:'148.427926…',6:'191.403500…'};
    let r='';
    for(let i=0;i<16;i++)r+=`<tr><th scope="row">${i+1}</th><td${i?'':' class="cur"'}>116.048467…</td><td>39.${t[i]}…</td><td>116.056800…</td><td>39.${t[i+1]}…</td><td>${sum[i]||'0.00000000…'}</td></tr>`;
    r+='<tr><th></th><td></td><td></td><td></td><td></td><td></td></tr>';
    return `<style>:host{display:grid;grid-template-columns:1fr 14px;border-top:1px solid #b9b6b1;border-bottom:1px solid #b9b6b1;overflow:hidden;background:#fff}
    .v{overflow:hidden;border:1px solid #b9b6b1;border-width:0 1px}
    table{border-collapse:separate;border-spacing:0;table-layout:fixed;width:534px;color:#3c3c3c}
    th,td{box-sizing:border-box;height:30px;padding:0 0 2px 4px;border:1px solid #c6c6c6;border-width:0 1px 1px 0;font-weight:400;text-align:left;white-space:nowrap;overflow:hidden}
    td{font-size:15px;padding-left:3px}
    th{background:linear-gradient(#fff,#f0efee);color:#4c4c4c}thead th{height:25px;text-align:center;padding:1px 0 0;border-bottom-color:#a5a29e}
    col{width:100px}col:first-child{width:34px}
    tbody tr:nth-child(even) td{background:#eee}
    .cur{box-shadow:inset 0 0 0 2px #0df07e}
    .sb{display:flex;flex-direction:column;align-items:center;background:#dddbd9}
    .sb button{all:unset;box-sizing:border-box;width:12px;border:1px solid #b9b6b1;border-radius:6px;background:#f6f5f4;height:14px;display:grid;place-items:center}
    .sb .th{height:34px;background:linear-gradient(90deg,#fff,#e8e7e5);border-color:#8f8c88}
    .th i{width:4px;height:8px;background:repeating-linear-gradient(#999 0 1px,transparent 1px 3px)}
    .u,.d{border:3px solid transparent}.u{border-bottom:4px solid #aaa;border-top:0}.d{border-top:4px solid #666;border-bottom:0}
    .sp{flex:1}</style>
    <div class="v"><table><colgroup><col><col><col><col><col><col></colgroup><thead><tr><th></th><th>left</th><th>top</th><th>right</th><th>bottom</th><th>get_sum</th></tr></thead><tbody>${r}</tbody></table></div>
    <div class="sb"><button aria-label="Scroll up"><i class="u"></i></button><button class="th" aria-label="Scroll thumb"><i></i></button><span class="sp"></span><button aria-label="Scroll down"><i class="d"></i></button></div>`}
});

define('attribute-dialog',class extends Base{
  render(){return `<style>:host{display:flex;flex-direction:column;background:#f2f1f0;border-radius:7px 7px 0 0;box-shadow:0 5px 22px rgba(0,0,0,.6);--icon:16px;--cell:28px}
  header{display:flex;align-items:center;height:30px;padding:0 5px 0 44px;border-radius:7px 7px 0 0;background:linear-gradient(#5b5952,#3c3b37);color:#dfdbd2;gap:3px}
  h1{margin:0 -3px 0 0;flex:1;font:inherit;font-weight:700;white-space:nowrap;overflow:hidden}
  header button{all:unset;width:17px;height:17px;border-radius:50%;border:1px solid #35342f;box-sizing:border-box;background:linear-gradient(#8a8880,#66645e);display:grid;place-items:center}
  header .x{background:linear-gradient(#f47c52,#e5481b)}
  header svg{width:9px;height:9px;fill:none;stroke:#35342f;stroke-width:1.2}
  .bar{display:flex;align-items:center;height:32px;padding-left:2px}
  .bar tool-bar{flex:1}
  .more{all:unset;color:#000;font-weight:700;padding-right:3px}
  attribute-table{flex:1;min-height:0}
  footer{display:flex;align-items:center;height:28px;padding:0 4px 2px;box-sizing:border-box;gap:2px}
  footer button{all:unset;display:flex;align-items:center;justify-content:center;box-sizing:border-box;height:22px;min-width:20px;border:1px solid #b0ada9;border-radius:4px;background:linear-gradient(#fff,#efeeec)}
  footer .all{padding:0 3px}.all q-icon{margin-right:4px}
  footer .p{background:#dcdad7}
  footer span{flex:1}i{border:4px solid transparent;border-top:5px solid #777;border-bottom:0;margin:4px 0 0 3px}
  </style>
  <header><h1>Fengtai-Half-Min :: Features total: 850, filtered: 850, selected: 0</h1>
  <button aria-label="Minimize"><svg viewBox="0 0 9 9"><path d="M0 4.5h9"/></svg></button><button aria-label="Maximize"><svg viewBox="0 0 9 9"><path d="M1 1h7v7H1z"/></svg></button><button class="x" aria-label="Close"><svg viewBox="0 0 9 9"><path d="M1.5 1.5l6 6M7.5 1.5l-6 6"/></svg></button></header>
  <div class="bar"><tool-bar items="pencil editmulti savegray refresh / addrow trash / expr selall invert deselect filter movetop pan zoomsel / copy paste / addcol"></tool-bar><button class="more" aria-label="More tools">»</button></div>
  <attribute-table></attribute-table>
  <footer><button class="all"><q-icon name="filter"></q-icon>Show All Features<i></i></button><span></span><button aria-label="Form view"><q-icon name="formview"></q-icon></button><button class="p" aria-label="Table view"><q-icon name="table"></q-icon></button></footer>`}
});

define('spin-box',class extends Base{
  render(){return `<style>:host{display:flex;width:88px;height:26px;box-sizing:border-box;border:1px solid #aaa7a3;border-radius:4px;background:#fff;overflow:hidden}
  input{all:unset;flex:1;min-width:0;padding-left:5px}div{display:flex;flex-direction:column;width:15px;background:#f4f3f2;border-left:1px solid #d3d0cc}
  button{all:unset;flex:1;display:grid;place-items:center}i{border:3px solid transparent}.u{border-bottom:4px solid #777;border-top:0}.d{border-top:4px solid #777;border-bottom:0}</style>
  <input type="text" value="${this.getAttribute('value')}" aria-label="${this.getAttribute('label')}"><div><button aria-label="Increase"><i class="u"></i></button><button aria-label="Decrease"><i class="d"></i></button></div>`}
});

define('status-bar',class extends Base{
  render(){return `<style>:host{display:flex;align-items:center;height:31px;box-sizing:border-box;border-top:1px solid #fff;padding:0 11px 1px 5px;--icon:16px}${checkCss}
  .msg{flex:1;white-space:nowrap}
  .f{box-sizing:border-box;height:26px;border:1px solid #aaa7a3;border-radius:4px;background:#fff;font:inherit;color:#3c3c3c;margin:0;padding:0 5px}
  #c{width:154px;text-align:center}
  select.f{width:116px;appearance:none;background:url('data:image/svg+xml,<svg xmlns="http://www.w3.org/2000/svg" viewBox="0 0 24 24"><path d="M0 0h24v24H0z" fill="%23f4f3f2"/><path d="M0 0v24" stroke="%23ccc"/><path d="M8 10h8l-4 6z" fill="%23777"/></svg>') no-repeat right center/24px #fff}
  label{padding:0 6px 0 12px}.w{padding-right:11px}q-icon{margin:0 0 0 5px}spin-box{color:#3c3c3c}
  .r{padding:0 19px 0 8px}input[type=checkbox]{margin-left:11px}
  .crs{all:unset;display:flex;align-items:center;gap:4px}.crs q-icon{margin:0}.chat{all:unset;margin-left:20px}.chat q-icon{margin:0}</style>
  <span class="msg">Toggles the editing state of the current layer</span>
  <label for="c">Coordinate</label><input class="f" id="c" value="116.3079,39.9501"><q-icon name="extents"></q-icon>
  <label for="s">Scale</label><select class="f" id="s"><option>1:95,635</option></select><q-icon name="lock"></q-icon>
  <label>Magnifier</label><spin-box value="100%" label="Magnifier"></spin-box>
  <label class="w">Rotation</label><spin-box value="0.0" label="Rotation"></spin-box>
  <input type="checkbox" id="r" checked><label class="r" for="r">Render</label>
  <button class="crs"><q-icon name="crs"></q-icon>EPSG:4326</button><button class="chat" aria-label="Messages"><q-icon name="bubble"></q-icon></button>`}
});

define('qgis-app',class extends Base{
  render(){return `<style>:host{display:grid;grid-template-rows:auto auto 40px 40px 1fr auto;height:100vh;position:relative;overflow:hidden}
  main{display:grid;grid-template-columns:59px 294px 1fr;min-height:0}
  .docks{display:flex;flex-direction:column;gap:8px;min-height:0;padding:1px 0}
  .docks dock-panel:first-child{flex:1}.lay{height:213px}
  map-canvas{margin-left:6px}
  attribute-dialog{position:absolute;left:173px;top:78px;width:557px;height:600px}
  .t2{--menu-cell:42px;--arrow-gap:0px}</style>
  <title-bar></title-bar><menu-bar></menu-bar>
  <tool-bar items="^ new open save saveas composer manager | hand pan zoomin* zoomout zoom11 full zoomsel zoomlay zoomlast zoomnext bookmarknew bookmarks refresh | identify action~ select> expr> deselect table abacus sigma ruler> tip text> | help"></tool-bar>
  <tool-bar class="t2" items="^ pencils~ pencil savegray blob node _ | csw | python"></tool-bar>
  <main><layer-bar></layer-bar>
  <div class="docks"><dock-panel heading="Browser Panel" tools="addsel refresh filter collapse"><browser-tree></browser-tree></dock-panel>
  <dock-panel class="lay" heading="Layers Panel" tools="style group eye> filter"><layer-tree></layer-tree></dock-panel></div>
  <map-canvas></map-canvas></main>
  <status-bar></status-bar><attribute-dialog></attribute-dialog>`}
});
</script>
</body>
</html>
